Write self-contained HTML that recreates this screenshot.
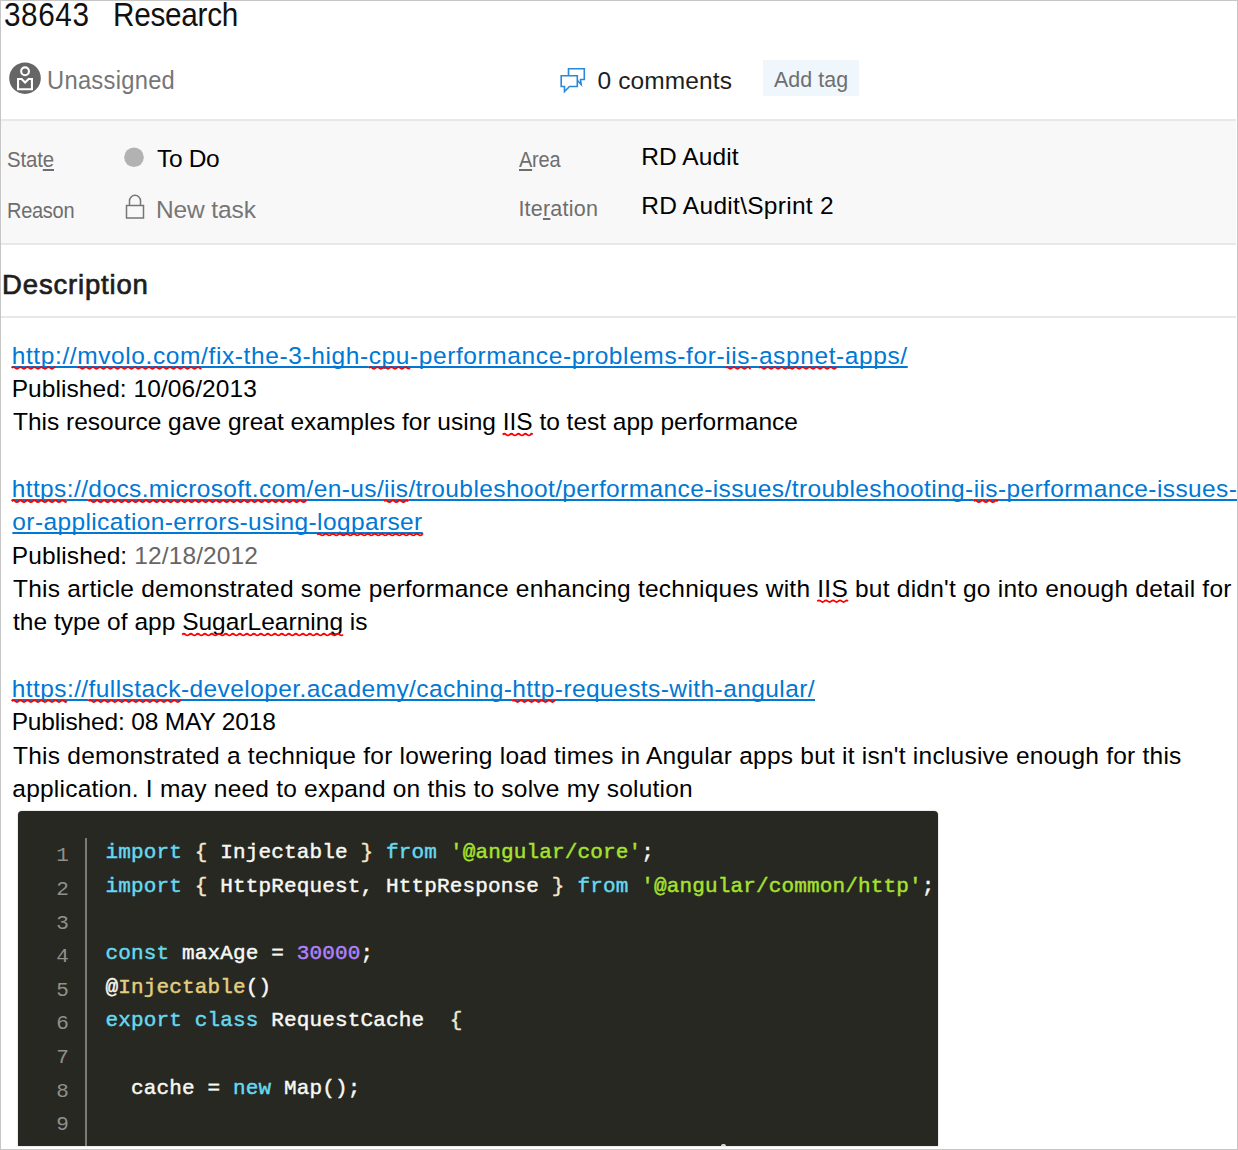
<!DOCTYPE html>
<html><head><meta charset="utf-8"><style>
html,body{margin:0;padding:0;}
body{width:1238px;height:1150px;position:relative;overflow:hidden;background:#fff;font-family:"Liberation Sans", sans-serif;}
.frame{position:absolute;left:0;top:0;width:1236px;height:1148px;border:1px solid #c6c6c6;}
.t{position:absolute;white-space:nowrap;}
.t u{text-decoration:underline;text-decoration-thickness:1.6px;text-underline-offset:1.6px;}
a{color:#0078d4;text-decoration:underline;text-decoration-thickness:1.7px;text-underline-offset:2px;text-decoration-skip-ink:none;}
.sq{}
.panel{position:absolute;left:1px;top:119px;width:1235px;height:124px;background:#f8f8f8;border-top:2px solid #e8e8e8;border-bottom:2px solid #e8e8e8;box-sizing:border-box;height:126px;}
.hr{position:absolute;left:1px;top:316px;width:1235px;height:2px;background:#e8e8e8;}
.code{position:absolute;left:18px;top:810.5px;width:920px;height:335px;background:#272822;border-radius:4px 4px 0 0;box-shadow:0 0 2px rgba(0,0,0,0.25);font-family:"Liberation Mono", monospace;font-size:21px;line-height:21px;color:#f8f8f2;font-weight:400;-webkit-text-stroke-width:0.45px;letter-spacing:0.15px;}
.c{position:absolute;left:87.5px;white-space:pre;}
.n{position:absolute;left:38.2px;width:10px;color:#90918b;-webkit-text-stroke-width:0;}
.vl{position:absolute;left:67.0px;top:27px;width:2px;height:308px;background:#7b7b76;}
.tag{position:absolute;left:763px;top:60px;width:96px;height:36px;background:#eff6fc;}
</style></head><body>
<div class="panel"></div>
<div class="hr"></div>
<div class="tag"></div>
<svg style="position:absolute;left:0;top:0" width="1238" height="300">
 <circle cx="25" cy="78.2" r="15.8" fill="#666"/>
 <circle cx="25.05" cy="71.3" r="3.9" fill="none" stroke="#fff" stroke-width="2.1"/>
 <path d="M18.05 79.05 H21.6 L25.1 82.6 L28.6 79.05 H31.95 V89.25 H18.05 Z" fill="none" stroke="#fff" stroke-width="2.1" stroke-linejoin="miter"/>
 <g fill="none" stroke="#2b88d8" stroke-width="1.6">
  <path d="M568.5 75 V68.8 H584.3 V79.5 H580.5 L581.2 84.5 L577.5 80.5"/>
  <path d="M561.2 75.8 H577.3 V86.5 H569.5 L564.5 91.5 L564.5 86.5 H561.2 Z"/>
 </g>
 <circle cx="134" cy="157.2" r="9.8" fill="#b2b2b2"/>
 <g fill="none" stroke="#767676" stroke-width="1.5">
  <rect x="126.5" y="205.5" width="17" height="12.5"/>
  <path d="M129.5 205.5 V200.8 A5.5 5.5 0 0 1 140.5 200.8 V205.5"/>
 </g>
</svg>
<div class="t" id="t1" style="transform:scaleX(0.9);transform-origin:0 0;left:3.60px;top:-1.70px;font-size:33px;line-height:33px;color:#111;font-weight:400;letter-spacing:0.650px">38643</div><div class="t" id="t2" style="transform:scaleX(0.9);transform-origin:0 0;left:112.65px;top:-1.70px;font-size:33px;line-height:33px;color:#111;font-weight:400;letter-spacing:-0.285px">Research</div><div class="t" id="un" style="transform:scaleX(0.93);transform-origin:0 0;left:47.35px;top:67.90px;font-size:25.5px;line-height:25.5px;color:#767676;font-weight:400;letter-spacing:0.305px">Unassigned</div><div class="t" id="cm" style="left:597.50px;top:69.32px;font-size:24.5px;line-height:24.5px;color:#201f1e;font-weight:400;letter-spacing:0.117px">0 comments</div><div class="t" id="at" style="transform:scaleX(0.95);transform-origin:0 0;left:774.00px;top:68.60px;font-size:22.5px;line-height:22.5px;color:#6e6e6e;font-weight:400;letter-spacing:0.066px">Add tag</div><div class="t" id="st" style="transform:scaleX(0.95);transform-origin:0 0;left:6.90px;top:149.61px;font-size:21.5px;line-height:21.5px;color:#6e6e6e;font-weight:400;letter-spacing:-0.150px">Stat<u>e</u></div><div class="t" id="td" style="left:157.00px;top:146.71px;font-size:24.5px;line-height:24.5px;color:#000;font-weight:400;letter-spacing:-0.350px">To Do</div><div class="t" id="rs" style="transform:scaleX(0.93);transform-origin:0 0;left:6.70px;top:201.01px;font-size:21.5px;line-height:21.5px;color:#6e6e6e;font-weight:400;letter-spacing:-0.300px">Reason</div><div class="t" id="nt" style="left:156.00px;top:197.51px;font-size:24.5px;line-height:24.5px;color:#767676;font-weight:400;letter-spacing:-0.111px">New task</div><div class="t" id="ar" style="transform:scaleX(0.93);transform-origin:0 0;left:519.00px;top:149.91px;font-size:21.5px;line-height:21.5px;color:#6e6e6e;font-weight:400;letter-spacing:-0.264px"><u>A</u>rea</div><div class="t" id="it" style="left:518.40px;top:198.91px;font-size:21.5px;line-height:21.5px;color:#6e6e6e;font-weight:400;letter-spacing:0.218px">Ite<u>r</u>ation</div><div class="t" id="ra" style="left:641.20px;top:144.71px;font-size:24.5px;line-height:24.5px;color:#000;font-weight:400;letter-spacing:0.095px">RD Audit</div><div class="t" id="rs2" style="left:641.20px;top:193.61px;font-size:24.5px;line-height:24.5px;color:#000;font-weight:400;letter-spacing:0.282px">RD Audit\Sprint 2</div><div class="t" id="ds" style="left:2.10px;top:271.00px;font-size:27.5px;line-height:27.5px;color:#1e1e1e;font-weight:400;letter-spacing:0.820px"><span style="-webkit-text-stroke:0.7px #1e1e1e">Description</span></div><div class="t" id="b0" style="left:11.70px;top:343.81px;font-size:24.5px;line-height:24.5px;color:#000;font-weight:400;letter-spacing:0.602px"><a><span class="sq">http</span>://<span class="sq">mvolo.com</span>/fix-the-3-high-<span class="sq">cpu</span>-performance-problems-for-<span class="sq">iis</span>-<span class="sq">aspnet</span>-apps/</a></div><div class="t" id="b1" style="left:11.70px;top:377.15px;font-size:24.5px;line-height:24.5px;color:#000;font-weight:400;letter-spacing:0.062px">Published: 10/06/2013</div><div class="t" id="b2" style="left:13.00px;top:410.46px;font-size:24.5px;line-height:24.5px;color:#000;font-weight:400;letter-spacing:-0.013px">This resource gave great examples for using <span class="sq">IIS</span> to test app performance</div><div class="t" id="b3" style="left:11.70px;top:477.13px;font-size:24.5px;line-height:24.5px;color:#000;font-weight:400;letter-spacing:0.391px"><a><span class="sq">https</span>://<span class="sq">docs.microsoft.com</span>/en-us/<span class="sq">iis</span>/troubleshoot/performance-issues/troubleshooting-<span class="sq">iis</span>-performance-issues-</a></div><div class="t" id="b4" style="left:12.35px;top:510.46px;font-size:24.5px;line-height:24.5px;color:#000;font-weight:400;letter-spacing:0.380px"><a>or-application-errors-using-<span class="sq">logparser</span></a></div><div class="t" id="b5" style="left:11.70px;top:543.80px;font-size:24.5px;line-height:24.5px;color:#000;font-weight:400;letter-spacing:0.120px">Published: <span style="color:#666">12/18/2012</span></div><div class="t" id="b6" style="left:13.00px;top:577.13px;font-size:24.5px;line-height:24.5px;color:#000;font-weight:400;letter-spacing:0.229px">This article demonstrated some performance enhancing techniques with <span class="sq">IIS</span> but didn't go into enough detail for</div><div class="t" id="b7" style="left:13.00px;top:610.45px;font-size:24.5px;line-height:24.5px;color:#000;font-weight:400;letter-spacing:0.013px">the type of app <span class="sq">SugarLearning</span> is</div><div class="t" id="b8" style="left:11.70px;top:677.11px;font-size:24.5px;line-height:24.5px;color:#000;font-weight:400;letter-spacing:0.420px"><a><span class="sq">https</span>://<span class="sq">fullstack</span>-developer.academy/caching-<span class="sq">http</span>-requests-with-angular/</a></div><div class="t" id="b9" style="left:11.70px;top:710.43px;font-size:24.5px;line-height:24.5px;color:#000;font-weight:400;letter-spacing:-0.155px">Published: 08 MAY 2018</div><div class="t" id="b10" style="left:13.00px;top:743.76px;font-size:24.5px;line-height:24.5px;color:#000;font-weight:400;letter-spacing:0.235px">This demonstrated a technique for lowering load times in Angular apps but it isn't inclusive enough for this</div><div class="t" id="b11" style="left:12.35px;top:777.09px;font-size:24.5px;line-height:24.5px;color:#000;font-weight:400;letter-spacing:0.213px">application. I may need to expand on this to solve my solution</div>
<svg style="position:absolute;left:0;top:0" width="1238" height="820"><g fill="none" stroke="#f00" stroke-width="1.8"><path d="M11.7 367.90 Q13.44 366.30 15.19 367.90 Q16.94 369.50 18.69 367.90 Q20.44 366.30 22.19 367.90 Q23.94 369.50 25.69 367.90 Q27.44 366.30 29.19 367.90 Q30.94 369.50 32.69 367.90 Q34.44 366.30 36.19 367.90 Q37.94 369.50 39.69 367.90 Q41.44 366.30 43.19 367.90 Q44.94 369.50 46.69 367.90 Q48.44 366.30 50.19 367.90 Q51.94 369.50 53.69 367.90 Q54.33 366.30 54.97 367.90"/><path d="M77.2 367.90 Q78.95 366.30 80.70 367.90 Q82.45 369.50 84.20 367.90 Q85.95 366.30 87.70 367.90 Q89.45 369.50 91.20 367.90 Q92.95 366.30 94.70 367.90 Q96.45 369.50 98.20 367.90 Q99.95 366.30 101.70 367.90 Q103.45 369.50 105.20 367.90 Q106.95 366.30 108.70 367.90 Q110.45 369.50 112.20 367.90 Q113.95 366.30 115.70 367.90 Q117.45 369.50 119.20 367.90 Q120.95 366.30 122.70 367.90 Q124.45 369.50 126.20 367.90 Q127.95 366.30 129.70 367.90 Q131.45 369.50 133.20 367.90 Q134.95 366.30 136.70 367.90 Q138.45 369.50 140.20 367.90 Q141.95 366.30 143.70 367.90 Q145.45 369.50 147.20 367.90 Q148.95 366.30 150.70 367.90 Q152.45 369.50 154.20 367.90 Q155.95 366.30 157.70 367.90 Q159.45 369.50 161.20 367.90 Q162.95 366.30 164.70 367.90 Q166.45 369.50 168.20 367.90 Q169.95 366.30 171.70 367.90 Q173.45 369.50 175.20 367.90 Q176.95 366.30 178.70 367.90 Q180.45 369.50 182.20 367.90 Q183.95 366.30 185.70 367.90 Q187.45 369.50 189.20 367.90 Q190.95 366.30 192.70 367.90 Q194.45 369.50 196.20 367.90 Q197.95 366.30 199.70 367.90 Q200.39 369.50 201.08 367.90"/><path d="M368.7 367.90 Q370.41 366.30 372.16 367.90 Q373.91 369.50 375.66 367.90 Q377.41 366.30 379.16 367.90 Q380.91 369.50 382.66 367.90 Q384.41 366.30 386.16 367.90 Q387.91 369.50 389.66 367.90 Q391.41 366.30 393.16 367.90 Q394.91 369.50 396.66 367.90 Q398.41 366.30 400.16 367.90 Q401.91 369.50 403.66 367.90 Q405.41 366.30 407.16 367.90 Q408.56 369.50 409.97 367.90"/><path d="M725.2 367.90 Q726.91 366.30 728.66 367.90 Q730.41 369.50 732.16 367.90 Q733.91 366.30 735.66 367.90 Q737.41 369.50 739.16 367.90 Q740.91 366.30 742.66 367.90 Q744.41 369.50 746.16 367.90 Q747.91 366.30 749.66 367.90 Q749.88 369.50 750.11 367.90"/><path d="M758.9 367.90 Q760.62 366.30 762.38 367.90 Q764.12 369.50 765.88 367.90 Q767.62 366.30 769.38 367.90 Q771.12 369.50 772.88 367.90 Q774.62 366.30 776.38 367.90 Q778.12 369.50 779.88 367.90 Q781.62 366.30 783.38 367.90 Q785.12 369.50 786.88 367.90 Q788.62 366.30 790.38 367.90 Q792.12 369.50 793.88 367.90 Q795.62 366.30 797.38 367.90 Q799.12 369.50 800.88 367.90 Q802.62 366.30 804.38 367.90 Q806.12 369.50 807.88 367.90 Q809.62 366.30 811.38 367.90 Q813.12 369.50 814.88 367.90 Q816.62 366.30 818.38 367.90 Q820.12 369.50 821.88 367.90 Q823.62 366.30 825.38 367.90 Q827.12 369.50 828.88 367.90 Q830.62 366.30 832.38 367.90 Q834.12 369.50 835.88 367.90 Q835.96 366.30 836.05 367.90"/><path d="M502.7 434.57 Q504.42 432.97 506.17 434.57 Q507.92 436.17 509.67 434.57 Q511.42 432.97 513.17 434.57 Q514.92 436.17 516.67 434.57 Q518.42 432.97 520.17 434.57 Q521.92 436.17 523.67 434.57 Q525.42 432.97 527.17 434.57 Q528.92 436.17 530.67 434.57 Q531.63 432.97 532.59 434.57"/><path d="M11.7 501.23 Q13.44 499.62 15.19 501.23 Q16.94 502.83 18.69 501.23 Q20.44 499.62 22.19 501.23 Q23.94 502.83 25.69 501.23 Q27.44 499.62 29.19 501.23 Q30.94 502.83 32.69 501.23 Q34.44 499.62 36.19 501.23 Q37.94 502.83 39.69 501.23 Q41.44 499.62 43.19 501.23 Q44.94 502.83 46.69 501.23 Q48.44 499.62 50.19 501.23 Q51.94 502.83 53.69 501.23 Q55.44 499.62 57.19 501.23 Q58.94 502.83 60.69 501.23 Q62.44 499.62 64.19 501.23 Q65.48 502.83 66.77 501.23"/><path d="M88.4 501.23 Q90.11 499.62 91.86 501.23 Q93.61 502.83 95.36 501.23 Q97.11 499.62 98.86 501.23 Q100.61 502.83 102.36 501.23 Q104.11 499.62 105.86 501.23 Q107.61 502.83 109.36 501.23 Q111.11 499.62 112.86 501.23 Q114.61 502.83 116.36 501.23 Q118.11 499.62 119.86 501.23 Q121.61 502.83 123.36 501.23 Q125.11 499.62 126.86 501.23 Q128.61 502.83 130.36 501.23 Q132.11 499.62 133.86 501.23 Q135.61 502.83 137.36 501.23 Q139.11 499.62 140.86 501.23 Q142.61 502.83 144.36 501.23 Q146.11 499.62 147.86 501.23 Q149.61 502.83 151.36 501.23 Q153.11 499.62 154.86 501.23 Q156.61 502.83 158.36 501.23 Q160.11 499.62 161.86 501.23 Q163.61 502.83 165.36 501.23 Q167.11 499.62 168.86 501.23 Q170.61 502.83 172.36 501.23 Q174.11 499.62 175.86 501.23 Q177.61 502.83 179.36 501.23 Q181.11 499.62 182.86 501.23 Q184.61 502.83 186.36 501.23 Q188.11 499.62 189.86 501.23 Q191.61 502.83 193.36 501.23 Q195.11 499.62 196.86 501.23 Q198.61 502.83 200.36 501.23 Q202.11 499.62 203.86 501.23 Q205.61 502.83 207.36 501.23 Q209.11 499.62 210.86 501.23 Q212.61 502.83 214.36 501.23 Q216.11 499.62 217.86 501.23 Q219.61 502.83 221.36 501.23 Q223.11 499.62 224.86 501.23 Q226.61 502.83 228.36 501.23 Q230.11 499.62 231.86 501.23 Q233.61 502.83 235.36 501.23 Q237.11 499.62 238.86 501.23 Q240.61 502.83 242.36 501.23 Q244.11 499.62 245.86 501.23 Q247.61 502.83 249.36 501.23 Q251.11 499.62 252.86 501.23 Q254.61 502.83 256.36 501.23 Q258.11 499.62 259.86 501.23 Q261.61 502.83 263.36 501.23 Q265.11 499.62 266.86 501.23 Q268.61 502.83 270.36 501.23 Q272.11 499.62 273.86 501.23 Q275.61 502.83 277.36 501.23 Q279.11 499.62 280.86 501.23 Q282.61 502.83 284.36 501.23 Q286.11 499.62 287.86 501.23 Q289.61 502.83 291.36 501.23 Q293.11 499.62 294.86 501.23 Q296.61 502.83 298.36 501.23 Q300.11 499.62 301.86 501.23 Q303.61 502.83 305.36 501.23 Q305.90 499.62 306.44 501.23"/><path d="M384.1 501.23 Q385.83 499.62 387.58 501.23 Q389.33 502.83 391.08 501.23 Q392.83 499.62 394.58 501.23 Q396.33 502.83 398.08 501.23 Q399.83 499.62 401.58 501.23 Q403.33 502.83 405.08 501.23 Q406.73 499.62 408.39 501.23"/><path d="M973.7 501.23 Q975.41 499.62 977.16 501.23 Q978.91 502.83 980.66 501.23 Q982.41 499.62 984.16 501.23 Q985.91 502.83 987.66 501.23 Q989.41 499.62 991.16 501.23 Q992.91 502.83 994.66 501.23 Q996.31 499.62 997.97 501.23"/><path d="M317.1 534.55 Q318.84 532.95 320.59 534.55 Q322.34 536.15 324.09 534.55 Q325.84 532.95 327.59 534.55 Q329.34 536.15 331.09 534.55 Q332.84 532.95 334.59 534.55 Q336.34 536.15 338.09 534.55 Q339.84 532.95 341.59 534.55 Q343.34 536.15 345.09 534.55 Q346.84 532.95 348.59 534.55 Q350.34 536.15 352.09 534.55 Q353.84 532.95 355.59 534.55 Q357.34 536.15 359.09 534.55 Q360.84 532.95 362.59 534.55 Q364.34 536.15 366.09 534.55 Q367.84 532.95 369.59 534.55 Q371.34 536.15 373.09 534.55 Q374.84 532.95 376.59 534.55 Q378.34 536.15 380.09 534.55 Q381.84 532.95 383.59 534.55 Q385.34 536.15 387.09 534.55 Q388.84 532.95 390.59 534.55 Q392.34 536.15 394.09 534.55 Q395.84 532.95 397.59 534.55 Q399.34 536.15 401.09 534.55 Q402.84 532.95 404.59 534.55 Q406.34 536.15 408.09 534.55 Q409.84 532.95 411.59 534.55 Q413.34 536.15 415.09 534.55 Q416.84 532.95 418.59 534.55 Q420.34 536.15 422.09 534.55 Q422.38 532.95 422.66 534.55"/><path d="M817.3 601.21 Q819.06 599.61 820.81 601.21 Q822.56 602.81 824.31 601.21 Q826.06 599.61 827.81 601.21 Q829.56 602.81 831.31 601.21 Q833.06 599.61 834.81 601.21 Q836.56 602.81 838.31 601.21 Q840.06 599.61 841.81 601.21 Q843.56 602.81 845.31 601.21 Q846.64 599.61 847.97 601.21"/><path d="M182.1 634.54 Q183.88 632.94 185.62 634.54 Q187.38 636.14 189.12 634.54 Q190.88 632.94 192.62 634.54 Q194.38 636.14 196.12 634.54 Q197.88 632.94 199.62 634.54 Q201.38 636.14 203.12 634.54 Q204.88 632.94 206.62 634.54 Q208.38 636.14 210.12 634.54 Q211.88 632.94 213.62 634.54 Q215.38 636.14 217.12 634.54 Q218.88 632.94 220.62 634.54 Q222.38 636.14 224.12 634.54 Q225.88 632.94 227.62 634.54 Q229.38 636.14 231.12 634.54 Q232.88 632.94 234.62 634.54 Q236.38 636.14 238.12 634.54 Q239.88 632.94 241.62 634.54 Q243.38 636.14 245.12 634.54 Q246.88 632.94 248.62 634.54 Q250.38 636.14 252.12 634.54 Q253.88 632.94 255.62 634.54 Q257.38 636.14 259.12 634.54 Q260.88 632.94 262.62 634.54 Q264.38 636.14 266.12 634.54 Q267.88 632.94 269.62 634.54 Q271.38 636.14 273.12 634.54 Q274.88 632.94 276.62 634.54 Q278.38 636.14 280.12 634.54 Q281.88 632.94 283.62 634.54 Q285.38 636.14 287.12 634.54 Q288.88 632.94 290.62 634.54 Q292.38 636.14 294.12 634.54 Q295.88 632.94 297.62 634.54 Q299.38 636.14 301.12 634.54 Q302.88 632.94 304.62 634.54 Q306.38 636.14 308.12 634.54 Q309.88 632.94 311.62 634.54 Q313.38 636.14 315.12 634.54 Q316.88 632.94 318.62 634.54 Q320.38 636.14 322.12 634.54 Q323.88 632.94 325.62 634.54 Q327.38 636.14 329.12 634.54 Q330.88 632.94 332.62 634.54 Q334.38 636.14 336.12 634.54 Q337.88 632.94 339.62 634.54 Q341.33 636.14 343.03 634.54"/><path d="M11.7 701.19 Q13.44 699.59 15.19 701.19 Q16.94 702.79 18.69 701.19 Q20.44 699.59 22.19 701.19 Q23.94 702.79 25.69 701.19 Q27.44 699.59 29.19 701.19 Q30.94 702.79 32.69 701.19 Q34.44 699.59 36.19 701.19 Q37.94 702.79 39.69 701.19 Q41.44 699.59 43.19 701.19 Q44.94 702.79 46.69 701.19 Q48.44 699.59 50.19 701.19 Q51.94 702.79 53.69 701.19 Q55.44 699.59 57.19 701.19 Q58.94 702.79 60.69 701.19 Q62.44 699.59 64.19 701.19 Q65.55 702.79 66.91 701.19"/><path d="M88.6 701.19 Q90.34 699.59 92.09 701.19 Q93.84 702.79 95.59 701.19 Q97.34 699.59 99.09 701.19 Q100.84 702.79 102.59 701.19 Q104.34 699.59 106.09 701.19 Q107.84 702.79 109.59 701.19 Q111.34 699.59 113.09 701.19 Q114.84 702.79 116.59 701.19 Q118.34 699.59 120.09 701.19 Q121.84 702.79 123.59 701.19 Q125.34 699.59 127.09 701.19 Q128.84 702.79 130.59 701.19 Q132.34 699.59 134.09 701.19 Q135.84 702.79 137.59 701.19 Q139.34 699.59 141.09 701.19 Q142.84 702.79 144.59 701.19 Q146.34 699.59 148.09 701.19 Q149.84 702.79 151.59 701.19 Q153.34 699.59 155.09 701.19 Q156.84 702.79 158.59 701.19 Q160.34 699.59 162.09 701.19 Q163.84 702.79 165.59 701.19 Q167.34 699.59 169.09 701.19 Q170.84 702.79 172.59 701.19 Q174.34 699.59 176.09 701.19 Q177.84 702.79 179.59 701.19 Q180.24 699.59 180.89 701.19"/><path d="M512.3 701.19 Q514.03 699.59 515.78 701.19 Q517.53 702.79 519.28 701.19 Q521.03 699.59 522.78 701.19 Q524.53 702.79 526.28 701.19 Q528.03 699.59 529.78 701.19 Q531.53 702.79 533.28 701.19 Q535.03 699.59 536.78 701.19 Q538.53 702.79 540.28 701.19 Q542.03 699.59 543.78 701.19 Q545.53 702.79 547.28 701.19 Q549.03 699.59 550.78 701.19 Q552.53 702.79 554.28 701.19 Q554.55 699.59 554.83 701.19"/></g></svg><div class="code"><div class="vl"></div><div class="c" style="top:31.91px"><span style="color:#66d9ef">import</span> <span style="color:#f0e6c8">{</span> Injectable <span style="color:#f0e6c8">}</span> <span style="color:#66d9ef">from</span> <span style="color:#a6e22e">'@angular/core'</span>;</div><div class="n" style="top:34.91px">1</div><div class="c" style="top:65.51px"><span style="color:#66d9ef">import</span> <span style="color:#f0e6c8">{</span> HttpRequest, HttpResponse <span style="color:#f0e6c8">}</span> <span style="color:#66d9ef">from</span> <span style="color:#a6e22e">'@angular/common/http'</span>;</div><div class="n" style="top:68.51px">2</div><div class="c" style="top:99.11px"></div><div class="n" style="top:102.11px">3</div><div class="c" style="top:132.71px"><span style="color:#66d9ef">const</span> maxAge = <span style="color:#ae81ff">30000</span>;</div><div class="n" style="top:135.71px">4</div><div class="c" style="top:166.31px">@<span style="color:#e2cf80">Injectable</span>()</div><div class="n" style="top:169.31px">5</div><div class="c" style="top:199.91px"><span style="color:#66d9ef">export</span> <span style="color:#66d9ef">class</span> RequestCache  <span style="color:#f0e6c8">{</span></div><div class="n" style="top:202.91px">6</div><div class="c" style="top:233.51px"></div><div class="n" style="top:236.51px">7</div><div class="c" style="top:267.11px">  cache = <span style="color:#66d9ef">new</span> Map();</div><div class="n" style="top:270.11px">8</div><div class="c" style="top:300.71px"></div><div class="n" style="top:303.71px">9</div></div>
<div style="position:absolute;left:721px;top:1143.5px;width:5px;height:2px;background:#d8d8c8;border-radius:2px 2px 0 0"></div>
<div class="frame"></div>
</body></html>
